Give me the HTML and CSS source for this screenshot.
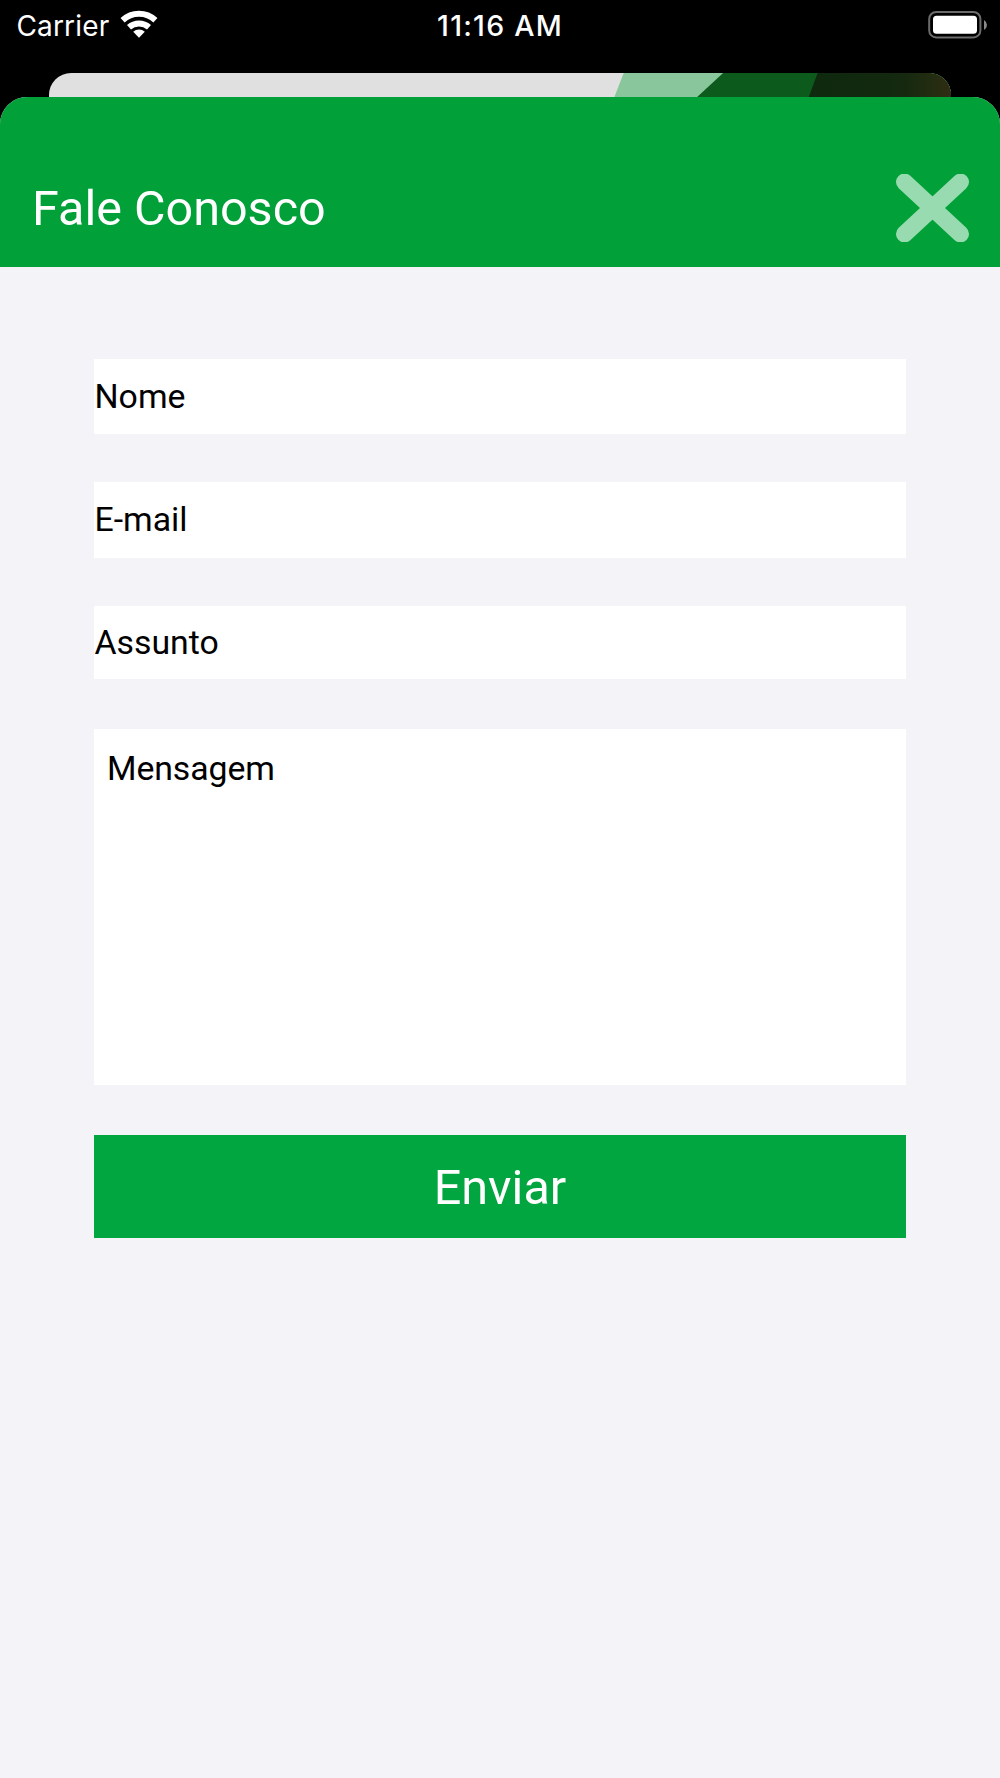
FILE: index.html
```html
<!DOCTYPE html>
<html lang="pt-BR">
<head>
<meta charset="utf-8">
<title>Fale Conosco</title>
<link rel="stylesheet" href="styles.css">
</head>
<body>
<div class="status">
  <div class="status-left">
    <span class="carrier">Carrier</span>
    <svg class="wifi" width="38" height="28" viewBox="0 0 38 28">
      <g fill="none" stroke="#fff" stroke-width="6">
        <path d="M2.6 10.2 A24 24 0 0 1 35.4 10.2"/>
        <path d="M9 17.3 A15 15 0 0 1 29 17.3"/>
      </g>
      <path d="M13.2 21.8 A8.6 8.6 0 0 1 24.8 21.8 L19 27.8 Z" fill="#fff"/>
    </svg>
  </div>
  <span class="time">11:16 AM</span>
  <svg class="battery" width="60" height="28" viewBox="0 0 60 28">
    <rect x="1.2" y="1" width="51.2" height="25.4" rx="7" fill="none" stroke="#6b6b6b" stroke-width="2"/>
    <rect x="5" y="4.8" width="44" height="18" rx="3.6" fill="#fff"/>
    <path d="M56 9 Q59 11 59 14 Q59 17 56 19 Z" fill="#8a8a8a"/>
  </svg>
</div>
<svg class="backdrop" width="902.5" height="24.5" viewBox="0 0 903 25" preserveAspectRatio="none">
  <defs>
    <linearGradient id="dark" x1="0" x2="1" y1="0" y2="0">
      <stop offset="0" stop-color="#0e290e"/>
      <stop offset=".65" stop-color="#14290f"/>
      <stop offset=".85" stop-color="#222c11"/>
      <stop offset="1" stop-color="#302c12"/>
    </linearGradient>
  </defs>
  <rect width="903" height="25" fill="#e0e0e0"/>
  <path d="M575 0 H903 V25 H565.5 Z" fill="#8ac69b"/>
  <path d="M674.5 0 H903 V25 H648 Z" fill="#0c5b1d"/>
  <path d="M769 0 H903 V25 H760 Z" fill="url(#dark)"/>
</svg>
<main class="sheet">
  <header class="header">
    <h1 class="title">Fale Conosco</h1>
    <svg class="close" width="73" height="68" viewBox="0 0 73 68">
      <path d="M8.5 8 L64.5 60 M64.5 8 L8.5 60" fill="none" stroke="#99dbb0" stroke-width="17" stroke-linecap="round"/>
    </svg>
  </header>
  <form class="form">
    <div class="field name">Nome</div>
    <div class="field email">E-mail</div>
    <div class="field subject">Assunto</div>
    <div class="field message">Mensagem</div>
    <button class="send" type="button">Enviar</button>
  </form>
</main>
</body>
</html>
```
FILE: styles.css
```css
* { box-sizing: border-box; }
body {
  margin: 0;
  height: 1778px;
  display: flex;
  flex-direction: column;
  background: #000;
  font-family: Roboto, sans-serif;
  overflow: hidden;
}
.status {
  height: 72.5px;
  padding: 0 12px 0 16px;
  display: grid;
  grid-template-columns: 1fr auto 1fr;
  align-items: start;
  color: #fff;
  font: 400 28px/34px Inter, sans-serif;
}
.status-left { display: flex; align-items: flex-start; gap: 11px; }
.carrier { padding: 9px 0 0 0.5px; letter-spacing: 0.15px; }
.time { padding: 9px 4px 0 0; font-weight: 500; font-size: 28.5px; letter-spacing: 1.25px; }
.wifi { margin-top: 9.5px; }
.battery { margin-top: 10.5px; justify-self: end; }
.backdrop { margin-left: 48.5px; border-radius: 22px 22px 0 0; flex: none; }
.sheet {
  flex: 1;
  background: #f3f3f8;
  border-radius: 27px 27px 0 0;
  overflow: hidden;
}
.header {
  height: 170.4px;
  padding: 77px 31px 0 32px;
  display: flex;
  align-items: flex-start;
  justify-content: space-between;
  background: #02a038;
}
.title {
  margin: 0;
  color: #fff;
  font-size: 48.5px;
  font-weight: 400;
  line-height: 69px;
}
.form {
  padding: 91.6px 94px 0;
  display: flex;
  flex-direction: column;
}
.field {
  padding-left: 0.5px;
  background: #fff;
  color: #000;
  font-size: 33.8px;
  line-height: 75px;
}
.name { height: 75px; margin-bottom: 48px; }
.email { height: 76px; margin-bottom: 48px; }
.subject { height: 73px; margin-bottom: 50px; line-height: 73px; }
.message { height: 356px; margin-bottom: 50.4px; padding: 2px 0 0 13px; letter-spacing: -0.08px; }
.send {
  height: 103px;
  padding: 1px 0 0;
  border: 0;
  background: #02a640;
  color: #fff;
  font: 400 48.5px/104px Roboto, sans-serif;
}
```
